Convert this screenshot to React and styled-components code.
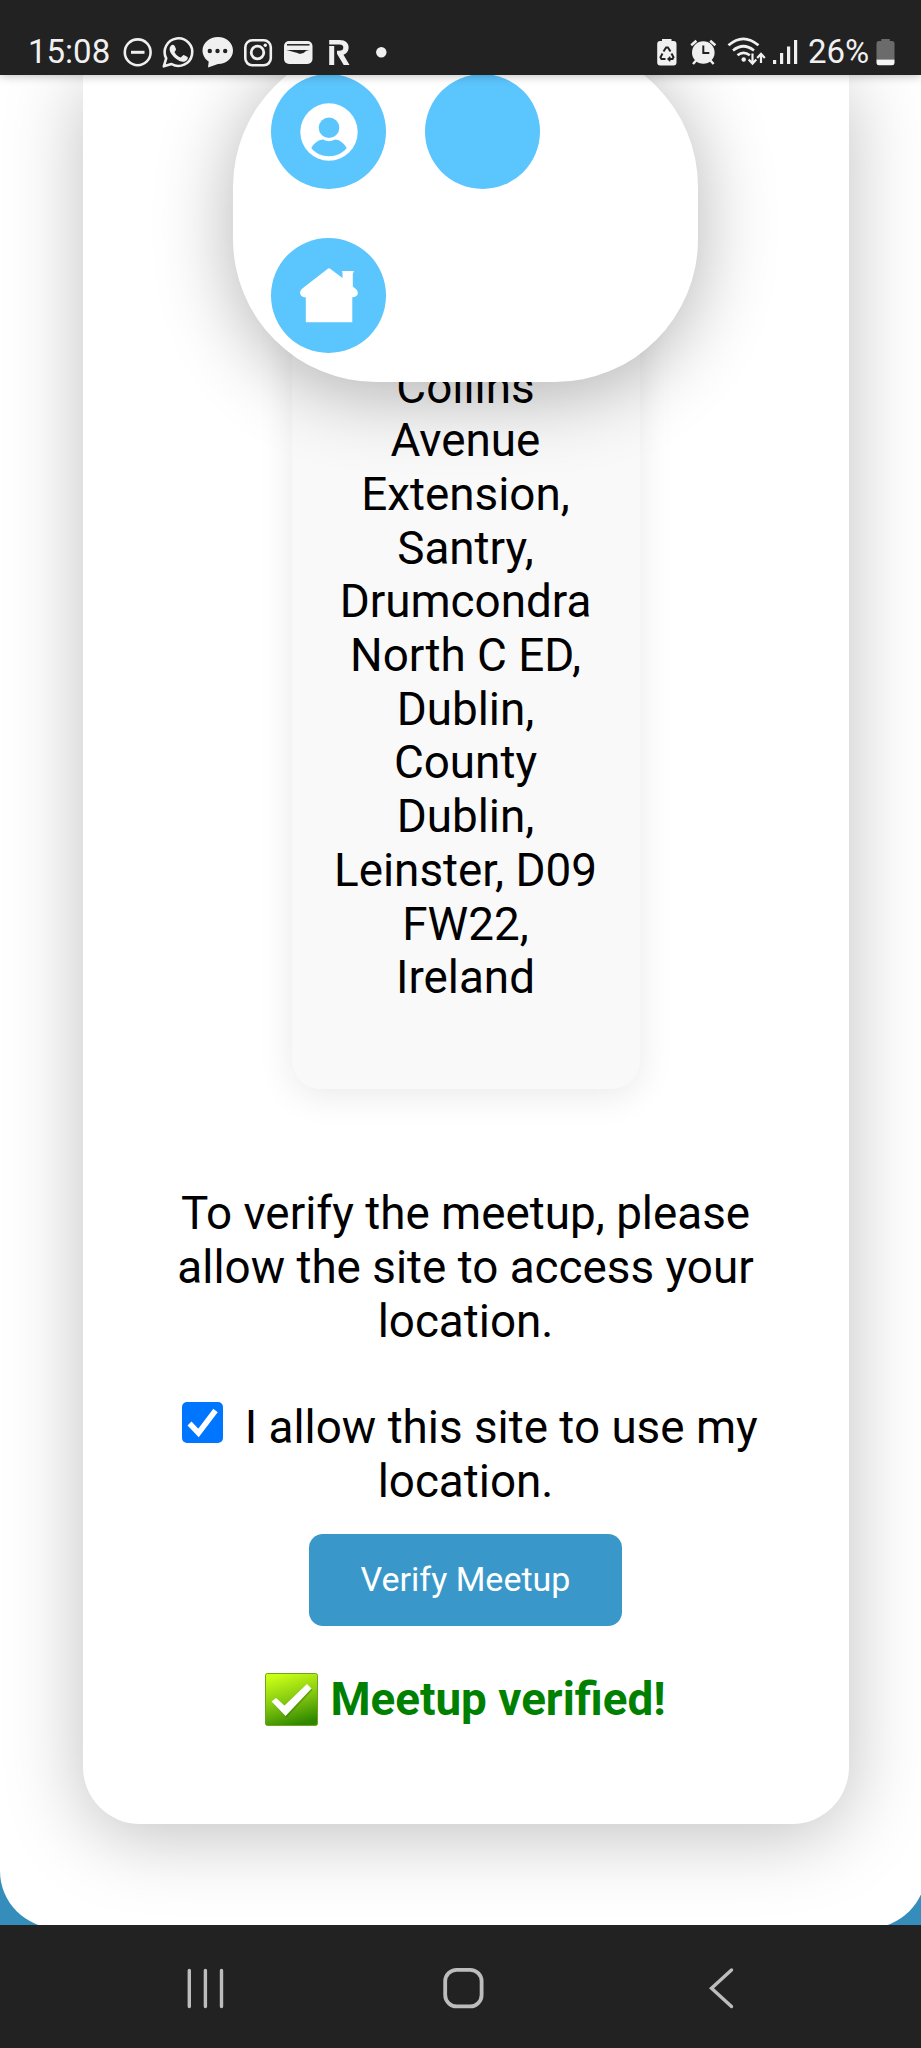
import React from "react";
import styled, { createGlobalStyle } from "styled-components";

const GlobalStyle = createGlobalStyle`
  * { box-sizing: border-box; }
  html, body { margin: 0; padding: 0; background: #222; }
  svg { display: block; flex: none; }
`;

const Screen = styled.div`
  display: flex;
  flex-direction: column;
  width: 921px;
  height: 2048px;
  overflow: hidden;
  font-family: Roboto, "Liberation Sans", sans-serif;
  color: #000;
`;

const StatusBar = styled.header`
  position: relative;
  z-index: 3;
  flex: none;
  display: flex;
  justify-content: space-between;
  height: 75px;
  padding: 33px 26px 0 27px;
  background: #222;
  color: #f0f0f0;
  box-shadow: 0 0 10px rgba(0, 0, 0, 0.3);
`;

const StatusGroup = styled.div`
  display: flex;
  align-items: center;
  height: 38px;
`;

const StatusText = styled.span`
  width: ${(p) => p.$width}px;
  padding-left: ${(p) => p.$inset}px;
  font-size: 33px;
  line-height: 38px;
  white-space: nowrap;
`;

const Viewport = styled.main`
  position: relative;
  z-index: 1;
  flex: 1;
  min-height: 0;
  overflow: hidden;
  background: #348dbb;
`;

const Sheet = styled.div`
  width: 926px;
  height: 1853px;
  padding-left: 82.5px;
  background: #fff;
  border-radius: 0 0 57px 57px;
`;

const Card = styled.section`
  display: flex;
  flex-direction: column;
  align-items: center;
  width: 766px;
  height: 1748.5px;
  background: #fff;
  border-radius: 0 0 57px 57px;
  box-shadow: 0 11px 78px rgba(0, 0, 0, 0.25);
  font-size: 45.8px;
  line-height: 53.7px;
  text-align: center;
`;

const AddressBox = styled.div`
  width: 348px;
  height: 1014.3px;
  padding: 285.5px 40px 0;
  background: #f9f9f9;
  border-radius: 0 0 28px 28px;
  box-shadow: 0 6px 36px rgba(0, 0, 0, 0.09);
`;

const Prompt = styled.p`
  width: 600px;
  margin: 98px 0 52.8px;
`;

const Consent = styled.label`
  width: 600px;
`;

const CheckBox = styled.span`
  display: inline-flex;
  margin: 0 21.5px 0 9px;
  vertical-align: 0;
  border-radius: 5px;
  background: #0075ff;
`;

const VerifyButton = styled.button`
  width: 312.5px;
  height: 91.7px;
  margin: 25.4px 0 45.5px;
  padding: 0 0 1px;
  border: 0;
  border-radius: 14px;
  background: #3998c9;
  color: #fff;
  font: 34px/40px Roboto, "Liberation Sans", sans-serif;
`;

const Result = styled.div`
  display: flex;
  align-items: center;
  gap: 12px;
  color: #008000;
  font-weight: 700;
`;

const ResultText = styled.span`
  padding-top: 2px;
`;

const FloatingMenu = styled.nav`
  position: absolute;
  top: -31px;
  left: 233px;
  display: flex;
  flex-wrap: wrap;
  align-content: flex-start;
  gap: 48.5px 38.5px;
  width: 465px;
  height: 338px;
  padding: 30px 38px;
  background: #fff;
  border-radius: 143px;
  box-shadow: 0 11px 78px rgba(0, 0, 0, 0.3);
`;

const MenuButton = styled.button`
  display: flex;
  align-items: center;
  justify-content: center;
  width: 115px;
  height: 115px;
  margin: 0 ${(p) => (p.$endOfRow ? 100 : 0)}px 0 0;
  padding: 0;
  border: 0;
  border-radius: 50%;
  background: #5bc5fd;
`;

const NavBar = styled.footer`
  position: relative;
  z-index: 2;
  flex: none;
  display: flex;
  gap: 214px;
  height: 123px;
  padding: 41px 0 0 185px;
  background: #222;
`;

const PAPER = "#f0f0f0";
const INK = "#222";

const NotificationIcons = () => (
  <svg width="290" height="38" viewBox="120 33 290 38" fill="none" stroke={PAPER} strokeWidth="2.6">
    <circle cx="137.7" cy="52.3" r="12.9" />
    <path d="M131 52.3h13.5" strokeWidth="3" />
    <path d="M163.8 66.3 L166.2 58.4 A13.8 13.8 0 1 1 171.5 64 Z" strokeLinejoin="round" />
    <path
      d="M173.2 45 q2.2-1 3.1 1.2 l1.2 2.9 q.3 1-1.5 2.8 q2 4.2 6.3 5.7 l2-2.2 q.6-.6 1.5-.1 l3.3 1.7 q1 2.3-2.3 4.2 q-2.3 1.2-5.7-.3 q-6.7-3-9.6-9.3 q-1.3-4.5 1.7-6.6z"
      fill={PAPER}
      stroke="none"
      transform="translate(-1.5 0)"
    />
    <path
      d="M218 37 C226.5 37 233 43 233 50.5 C233 58 226.5 64 218 64 L208 67.5 L208.7 61.6 C205 59 202.5 55 202.5 50.5 C202.5 43 209.5 37 218 37Z"
      fill={PAPER}
      stroke="none"
    />
    <g fill={INK} stroke="none">
      <circle cx="209.8" cy="51" r="2.2" />
      <circle cx="217.5" cy="51" r="2.2" />
      <circle cx="225.2" cy="51" r="2.2" />
    </g>
    <rect x="245.3" y="40.3" width="25.5" height="25" rx="7" />
    <circle cx="257.5" cy="52.5" r="6.3" strokeWidth="2.8" />
    <circle cx="265.3" cy="45.3" r="1.7" fill={PAPER} stroke="none" />
    <rect x="284" y="41" width="28.5" height="23" rx="5" fill={PAPER} stroke="none" />
    <path d="M287 44.8h22.5" stroke={INK} strokeWidth="1.5" />
    <path d="M286.5 50 H309.5 L306.3 50.8 Q302 55.5 297.5 53 L286.5 50Z" fill={INK} stroke="none" />
    <path d="M329.2 46h5v19h-5z" fill={PAPER} stroke="none" />
    <path
      d="M329.2 40 H339.5 C345.5 40 349 43.3 348.600 48 C348.3 51.5 346.5 53.7 343.5 54.7 L349.5 65 H343.7 L337 53.8 V50.8 H339 C342 50.8 343.3 49.800 343.3 47.6 C343.3 45.5 342 44.5 339.5 44.5 H329.2Z"
      fill={PAPER}
      stroke="none"
    />
    <circle cx="381.3" cy="52.3" r="5.2" fill={PAPER} stroke="none" />
  </svg>
);

const SystemIcons = () => (
  <svg width="155" height="38" viewBox="650 33 155 38" fill={PAPER} stroke="none">
    <path d="M662 41 v-2 h9.5 v2 h2 q3 0 3 3 v18.500 q0 3-3 3 h-13.300 q-3 0-3-3 v-18.500 q0-3 3-3z" />
    <g fill="none" stroke={INK} strokeWidth="2">
      <path d="M663.5 51.5 l2.6-4 h1.8 l2.6 4" />
      <path d="M662.5 53.5 l-2 3.8 1 1.7 h4" />
      <path d="M671.5 53.5 l2 3.8-1 1.7 h-4.500" />
      <path d="M670.3 56.7 l-2.3 2.3 2.3 2.3" strokeWidth="1.4" />
    </g>
    <circle cx="703.3" cy="52.5" r="11.3" />
    <path d="M691.2 45.3 l5.2-4.600 M715.4 45.3 l-5.2-4.600 M693 64 l4-4.500 M713.6 64 l-4-4.500" stroke={PAPER} strokeWidth="2.5" />
    <path d="M703.3 45.5 v7.5 h6" fill="none" stroke={INK} strokeWidth="2" />
    <g fill="none" stroke={PAPER} strokeWidth="2.7">
      <path d="M728.5 45.3 q14.7-13 30 0" />
      <path d="M733 50.5 q10.3-8.500 21 0" />
      <path d="M737.5 55.3 q6-4.800 12.3 0" />
      <path d="M752.5 53.5 v9.500 M748.7 59.5 l3.8 4.2 3.8-4.2 M761 63 v-8.500 M757.2 58 l3.8-4.2 3.8 4.2" strokeWidth="2.2" />
    </g>
    <circle cx="743.7" cy="59.5" r="2.2" />
    <rect x="773" y="60" width="3.2" height="4" />
    <rect x="780" y="53" width="3.2" height="11" />
    <rect x="787" y="46.5" width="3.2" height="17.5" />
    <rect x="794" y="40" width="3.2" height="24" />
  </svg>
);

const BatteryIcon = () => (
  <svg width="19" height="38" viewBox="0 0 19 38">
    <path d="M5.3 8 v-2 h8.5 v2 h2.2 q2.5 0 2.5 2.5 v16 h-18 v-16 q0-2.5 2.5-2.500z" fill="#6b6b6b" />
    <path d="M.5 26.5 h18 v3.5 q0 2.3-2.5 2.3 h-13 q-2.5 0-2.500-2.300z" fill="#f5f5f5" />
  </svg>
);

const UserIcon = () => (
  <svg width="58" height="58" viewBox="0 0 58 58">
    <circle cx="29" cy="29" r="28.7" fill="#fff" />
    <g fill="#5bc5fd">
      <circle cx="29" cy="24.7" r="10.3" />
      <path d="M11.3 45 C14.5 39.5 19 36.5 23.3 36.5 C27 38.7 31 38.7 34.7 36.5 C39 36.5 43.5 39.5 46.7 45 C42.5 50.5 36 53.2 29 53.2 C22 53.2 15.5 50.5 11.3 45Z" />
    </g>
  </svg>
);

const HouseIcon = () => (
  <svg width="58" height="58" viewBox="0 0 58 58" fill="#fff">
    <path d="M27.5 2.9 Q29 1.7 30.5 2.9 L42.5 12 V7.5 L42 5 H54 L52.8 8 V20.5 L56.5 23.5 C59.5 27.5 57 31 52.3 31.3 V56.3 H5.8 V31.3 C0 31.3 -1.5 26 2 22.8 Z" />
  </svg>
);

const CheckMark = () => (
  <svg width="41" height="41" viewBox="0 0 41 41">
    <path d="M7.5 21.5 L16.5 31 L33.5 8.500" fill="none" stroke="#fff" strokeWidth="5.5" />
  </svg>
);

const VerifiedIcon = () => (
  <svg width="53" height="53" viewBox="0 0 53 53">
    <defs>
      <linearGradient id="verified" x1="0.3" y1="0" x2="0.6" y2="1">
        <stop offset="0" stopColor="#cbff16" />
        <stop offset="0.5" stopColor="#86ca10" />
        <stop offset="1" stopColor="#2f8700" />
      </linearGradient>
    </defs>
    <rect x="0.5" y="0.5" width="52" height="52" rx="2" fill="url(#verified)" stroke="#6da51b" />
    <path d="M6.5 28.5 L11 25 L19.5 32 L41.5 11 L46.5 15.5 L20.5 43.5Z" fill="#3c7808" opacity="0.45" transform="translate(1 1.5)" />
    <path d="M6.5 28.5 L11 25 L19.5 32.5 L42 11 L46.5 15.5 L20.5 43Z" fill="#fff" />
  </svg>
);

const NavIcon = ({ width, children }) => (
  <svg width={width} height="44" viewBox={`0 0 ${width} 44`} fill="none" stroke="#bdbdbd" strokeWidth="3.4" strokeLinecap="round">
    {children}
  </svg>
);

const ADDRESS = [
  "Collins", "Avenue", "Extension,", "Santry,", "Drumcondra", "North C ED,",
  "Dublin,", "County", "Dublin,", "Leinster, D09", "FW22,", "Ireland",
];

const AddressLine = styled.div`
  white-space: nowrap;
`;

export default function App() {
  return (
    <Screen>
      <GlobalStyle />
      <StatusBar>
        <StatusGroup>
          <StatusText $width={93} $inset={1}>15:08</StatusText>
          <NotificationIcons />
        </StatusGroup>
        <StatusGroup>
          <SystemIcons />
          <StatusText $width={71} $inset={3}>26%</StatusText>
          <BatteryIcon />
        </StatusGroup>
      </StatusBar>
      <Viewport>
        <Sheet>
          <Card>
            <AddressBox>
              {ADDRESS.map((line, i) => (
                <AddressLine key={i}>{line}</AddressLine>
              ))}
            </AddressBox>
            <Prompt>
              To verify the meetup, please
              <br />
              allow the site to access your
              <br />
              location.
            </Prompt>
            <Consent>
              <CheckBox role="checkbox" aria-checked="true">
                <CheckMark />
              </CheckBox>
              I allow this site to use my
              <br />
              location.
            </Consent>
            <VerifyButton>Verify Meetup</VerifyButton>
            <Result>
              <VerifiedIcon />
              <ResultText>Meetup verified!</ResultText>
            </Result>
          </Card>
        </Sheet>
        <FloatingMenu>
          <MenuButton aria-label="Profile">
            <UserIcon />
          </MenuButton>
          <MenuButton $endOfRow />
          <MenuButton aria-label="Home">
            <HouseIcon />
          </MenuButton>
        </FloatingMenu>
      </Viewport>
      <NavBar>
        <NavIcon width={42}>
          <path d="M4.3 4.5V40.5M20.400 4.5V40.5M36.5 4.5V40.5" />
        </NavIcon>
        <NavIcon width={53}>
          <rect x="4.2" y="3.8" width="36.4" height="36.600" rx="11.5" strokeWidth="3.8" />
        </NavIcon>
        <NavIcon width={27}>
          <path d="M23.5 4 L3.5 22.2 L23.5 40.5" />
        </NavIcon>
      </NavBar>
    </Screen>
  );
}
